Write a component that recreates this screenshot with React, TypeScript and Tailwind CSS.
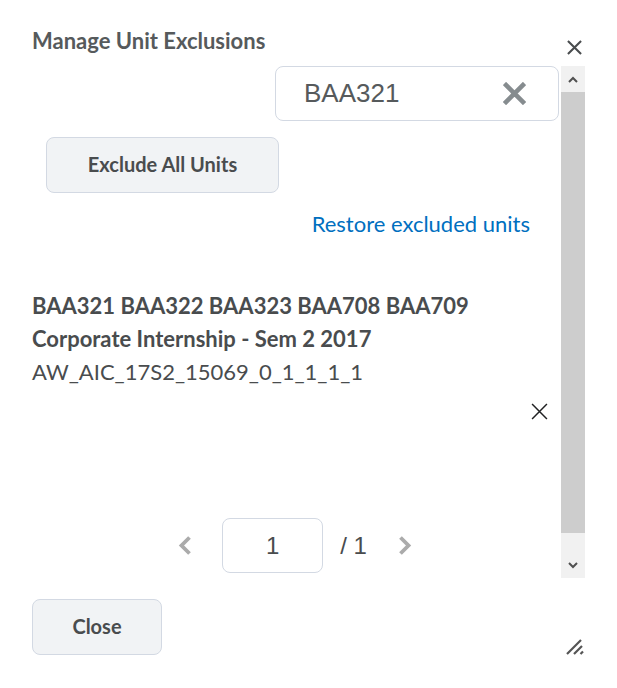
import React from "react";

const CloseIcon: React.FC<{ size: number; stroke: number; color: string }> = ({ size, stroke, color }) => (
  <svg width={size} height={size} viewBox="0 0 16 16" fill="none">
    <path d="M1 1L15 15M15 1L1 15" stroke={color} strokeWidth={stroke} strokeLinecap="butt" />
  </svg>
);

const Chevron: React.FC<{ dir: "left" | "right" }> = ({ dir }) => (
  <svg width="14" height="19" viewBox="0 0 14 19" fill="none">
    <path
      d={dir === "left" ? "M11.5 1.5L3.5 9.5L11.5 17.5" : "M2.5 1.5L10.5 9.5L2.5 17.5"}
      stroke="#ababab"
      strokeWidth="3.8"
    />
  </svg>
);

const App: React.FC = () => {
  return (
    <div
      className="relative flex h-[688px] w-[617px] flex-col bg-white px-8 text-[#494c4e]"
      style={{ fontFamily: "Lato, 'Noto Sans', sans-serif" }}
    >
      <div className="flex h-[66px] items-start justify-between">
        <h1 className="pt-[28px] text-[22px] font-bold leading-[26px] text-[#565a5c]">
          Manage Unit Exclusions
        </h1>
        <button className="mr-[3px] mt-[40px]">
          <CloseIcon size={15} stroke={2.2} color="#494c4e" />
        </button>
      </div>

      <div className="flex h-[512px]">
        <div className="flex flex-1 flex-col">
          <div className="flex justify-end pr-[2px]">
            <div className="flex h-[55px] w-[284px] items-center justify-between rounded-[8px] border border-[#d3d9e3] pl-[28px] pr-[32px]">
              <span
                className="text-[26px] text-[#565a5c]"
                style={{ fontFamily: "'Liberation Sans', Arial, sans-serif" }}
              >
                BAA321
              </span>
              <CloseIcon size={23} stroke={3.2} color="#868c8f" />
            </div>
          </div>

          <button className="ml-[14px] mt-[16px] h-[56px] w-[233px] rounded-[8px] border border-[#d3d9e3] bg-[#f1f3f5] pb-[2px] text-[20px] font-bold text-[#494c4e]">
            Exclude All Units
          </button>

          <div className="mt-[18px] pr-[31px] text-right text-[22px] leading-[26px] text-[#006fbf]">
            Restore excluded units
          </div>

          <div className="mt-[52px] text-[22px] leading-[33px] text-[#494c4e]">
            <div className="font-bold">BAA321 BAA322 BAA323 BAA708 BAA709</div>
            <div className="font-bold">Corporate Internship - Sem 2 2017</div>
            <div>AW_AIC_17S2_15069_0_1_1_1_1</div>
          </div>

          <div className="mt-[15px] flex justify-end pr-[13px]">
            <CloseIcon size={17} stroke={1.4} color="#202122" />
          </div>

          <div className="mb-[5px] mt-auto flex items-center justify-center pr-[3px]">
            <Chevron dir="left" />
            <div
              className="ml-[30px] flex h-[55px] w-[101px] items-center justify-center rounded-[8px] border border-[#d3d9e3] text-[24px] text-[#494c4e]"
              style={{ fontFamily: "'Liberation Sans', Arial, sans-serif" }}
            >
              1
            </div>
            <span
              className="ml-[17px] text-[24px] text-[#494c4e]"
              style={{ fontFamily: "'Liberation Sans', Arial, sans-serif" }}
            >
              / 1
            </span>
            <div className="ml-[31px]">
              <Chevron dir="right" />
            </div>
          </div>
        </div>

        <div className="flex w-[24px] flex-col bg-[#f1f1f1]">
          <div className="flex h-[26px] items-center justify-center">
            <svg width="10" height="7" viewBox="0 0 10 7" fill="none">
              <path d="M1 6L5 2L9 6" stroke="#505050" strokeWidth="2" />
            </svg>
          </div>
          <div className="flex-1 bg-[#cdcdcd]" />
          <div className="flex h-[45px] items-end justify-center pb-[9px]">
            <svg width="10" height="7" viewBox="0 0 10 7" fill="none">
              <path d="M1 1L5 5L9 1" stroke="#505050" strokeWidth="2" />
            </svg>
          </div>
        </div>
      </div>

      <div className="mt-[21px]">
        <button className="h-[56px] w-[130px] rounded-[8px] border border-[#d3d9e3] bg-[#f1f3f5] pb-[2px] text-[20px] font-bold text-[#494c4e]">
          Close
        </button>
      </div>

      <svg
        className="absolute bottom-[33px] right-[33px]"
        width="18"
        height="18"
        viewBox="0 0 18 18"
        fill="none"
      >
        <path d="M1 17L15 3M8 17L16 9M14.5 17L17 14.5" stroke="#555" strokeWidth="2.2" />
      </svg>
    </div>
  );
};

export default App;
